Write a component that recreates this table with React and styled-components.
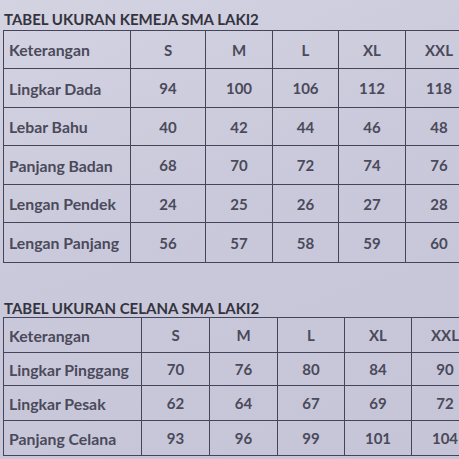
import React from 'react';
import styled, { createGlobalStyle } from 'styled-components';

const GlobalStyle = createGlobalStyle`
  html, body {
    margin: 0;
    padding: 0;
  }
  body {
    background: linear-gradient(160deg, #d4d3e2 0%, #cac9db 45%, #c6c5d8 100%);
    font-family: Lato, "Open Sans", sans-serif;
  }
`;

const Page = styled.div`
  width: 459px;
  height: 459px;
  overflow: hidden;
  padding: 11px 0 0 3px;
  box-sizing: border-box;
`;

const Section = styled.section`
  display: flex;
  flex-direction: column;
  margin-top: ${({ $gap }) => $gap || 0}px;
`;

const Title = styled.h2`
  margin: 0 0 ${({ $space }) => $space}px 1px;
  font-size: 15px;
  line-height: 17px;
  font-weight: 700;
  color: #34343f;
  letter-spacing: 0;
  white-space: nowrap;
`;

const Table = styled.table`
  border-collapse: collapse;
  table-layout: fixed;
  width: ${({ $width }) => $width}px;
  color: #4a4a5a;
  font-size: 15px;
  font-weight: 700;
`;

const Row = styled.tr`
  height: ${({ $h }) => $h}px;
`;

const Cell = styled.td`
  border: 1.5px solid #45455a;
  padding: 0 0 0 ${({ $label }) => ($label ? 5 : 0)}px;
  text-align: ${({ $label }) => ($label ? 'left' : 'center')};
  font-size: ${({ $label }) => ($label ? 15.8 : 15)}px;
  white-space: nowrap;
  overflow: hidden;
`;

const sizes = ['S', 'M', 'L', 'XL', 'XXL'];

const shirt = {
  title: 'TABEL UKURAN KEMEJA SMA LAKI2',
  cols: [127, 75, 67, 66, 67, 67],
  heights: [38, 39, 38, 39, 38, 40],
  rows: [
    ['Lingkar Dada', 94, 100, 106, 112, 118],
    ['Lebar Bahu', 40, 42, 44, 46, 48],
    ['Panjang Badan', 68, 70, 72, 74, 76],
    ['Lengan Pendek', 24, 25, 26, 27, 28],
    ['Lengan Panjang', 56, 57, 58, 59, 60],
  ],
};

const pants = {
  title: 'TABEL UKURAN CELANA SMA LAKI2',
  cols: [138, 68, 68, 67, 67, 67],
  heights: [35, 33, 35, 35],
  rows: [
    ['Lingkar Pinggang', 70, 76, 80, 84, 90],
    ['Lingkar Pesak', 62, 64, 67, 69, 72],
    ['Panjang Celana', 93, 96, 99, 101, 104],
  ],
};

const SizeTable = ({ data, gap, space }) => {
  const width = data.cols.reduce((a, b) => a + b, 0);
  return (
    <Section $gap={gap}>
      <Title $space={space}>{data.title}</Title>
      <Table $width={width}>
        <colgroup>
          {data.cols.map((w, i) => (
            <col key={i} style={{ width: w }} />
          ))}
        </colgroup>
        <tbody>
          <Row $h={data.heights[0]}>
            <Cell $label>Keterangan</Cell>
            {sizes.map((s) => (
              <Cell key={s}>{s}</Cell>
            ))}
          </Row>
          {data.rows.map((r, i) => (
            <Row key={r[0]} $h={data.heights[i + 1]}>
              <Cell $label>{r[0]}</Cell>
              {r.slice(1).map((v, j) => (
                <Cell key={j}>{v}</Cell>
              ))}
            </Row>
          ))}
        </tbody>
      </Table>
    </Section>
  );
};

export default function App() {
  return (
    <>
      <GlobalStyle />
      <Page>
        <SizeTable data={shirt} space={2} />
        <SizeTable data={pants} gap={37} space={0} />
      </Page>
    </>
  );
}
